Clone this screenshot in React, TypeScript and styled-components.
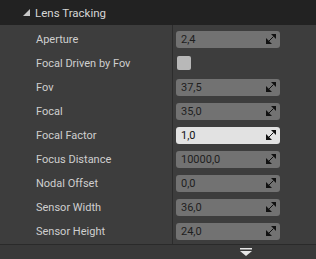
import styled, { createGlobalStyle } from 'styled-components';

const GlobalStyle = createGlobalStyle`
  html, body {
    margin: 0;
    padding: 0;
    background: #3d3d3d;
  }
  * {
    box-sizing: border-box;
  }
`;

type Prop =
  | { label: string; kind: 'number'; value: string; active?: boolean }
  | { label: string; kind: 'check' };

const props: Prop[] = [
  { label: 'Aperture', kind: 'number', value: '2,4' },
  { label: 'Focal Driven by Fov', kind: 'check' },
  { label: 'Fov', kind: 'number', value: '37,5' },
  { label: 'Focal', kind: 'number', value: '35,0' },
  { label: 'Focal Factor', kind: 'number', value: '1,0', active: true },
  { label: 'Focus Distance', kind: 'number', value: '10000,0' },
  { label: 'Nodal Offset', kind: 'number', value: '0,0' },
  { label: 'Sensor Width', kind: 'number', value: '36,0' },
  { label: 'Sensor Height', kind: 'number', value: '24,0' },
];

const Panel = styled.div`
  width: 316px;
  height: 259px;
  display: flex;
  flex-direction: column;
  font-family: Roboto, 'Liberation Sans', sans-serif;
  background: #3d3d3d;
  overflow: hidden;
`;

const Header = styled.div`
  height: 25px;
  flex: none;
  display: flex;
  align-items: center;
  gap: 5px;
  padding-left: 23px;
  background: #222222;
  color: #d6d6d6;
  font-size: 11.5px;
`;

const Body = styled.div`
  flex: none;
  padding-top: 2px;
  height: 219px;
  background:
    linear-gradient(
      to right,
      transparent 172px,
      #2c2c2c 172px,
      #2c2c2c 173px,
      transparent 173px
    ),
    #3d3d3d;
`;

const Row = styled.div`
  height: 24px;
  display: grid;
  grid-template-columns: 173px 1fr;
  align-items: center;
`;

const Label = styled.span`
  padding-left: 36px;
  font-size: 11px;
  color: #cfcfcf;
  white-space: nowrap;
`;

const Value = styled.div`
  padding-left: 3px;
  display: flex;
  align-items: center;
`;

const Field = styled.div<{ $active?: boolean }>`
  width: 104px;
  height: 17px;
  border-radius: 3px;
  display: flex;
  align-items: center;
  justify-content: space-between;
  padding: 0 4px 0 5px;
  background: ${(p) => (p.$active ? '#e2e2e2' : '#727272')};
  color: ${(p) => (p.$active ? '#111111' : '#1e1e1e')};
  font-size: 11px;
`;

const Check = styled.div`
  width: 14px;
  height: 14px;
  margin-left: 1px;
  border-radius: 2px;
  background: #b8b8b8;
`;

const Footer = styled.div`
  flex: 1;
  border-top: 1px solid #2a2a2a;
  background: #393939;
  display: flex;
  align-items: flex-start;
  padding: 3px 0 0 240px;
`;

function SpinIcon() {
  return (
    <svg width="10" height="10" viewBox="0 0 10 10">
      <polygon points="5,0 10,0 10,5" fill="#111" />
      <polygon points="0,4 0,10 6,10" fill="#111" />
      <line x1="2.5" y1="7.5" x2="7.5" y2="2.5" stroke="#111" strokeWidth="1" />
    </svg>
  );
}

function CollapseIcon() {
  return (
    <svg width="7" height="7" viewBox="0 0 7 7">
      <polygon points="7,0 7,7 0,7" fill="#c8c8c8" />
    </svg>
  );
}

function MoreIcon() {
  return (
    <svg width="12" height="8" viewBox="0 0 12 8">
      <rect x="0" y="0" width="12" height="1.5" fill="#e6e6e6" />
      <polygon points="0,3 12,3 6,8" fill="#e6e6e6" />
    </svg>
  );
}

export default function App() {
  return (
    <>
      <GlobalStyle />
      <Panel>
        <Header>
          <CollapseIcon />
          <span>Lens Tracking</span>
        </Header>
        <Body>
          {props.map((p) => (
            <Row key={p.label}>
              <Label>{p.label}</Label>
              <Value>
                {p.kind === 'check' ? (
                  <Check />
                ) : (
                  <Field $active={p.active}>
                    <span>{p.value}</span>
                    <SpinIcon />
                  </Field>
                )}
              </Value>
            </Row>
          ))}
        </Body>
        <Footer>
          <MoreIcon />
        </Footer>
      </Panel>
    </>
  );
}
